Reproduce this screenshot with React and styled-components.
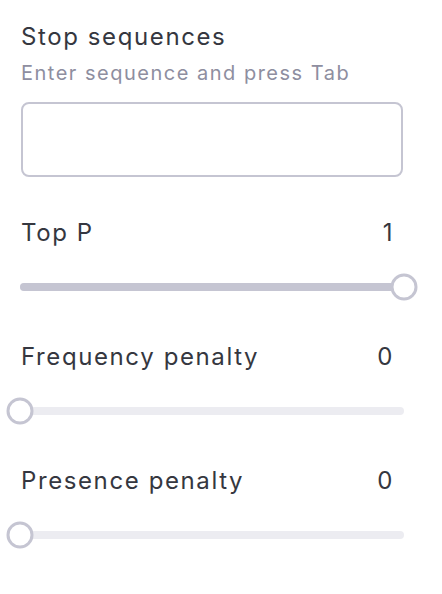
import React from "react";
import styled, { createGlobalStyle } from "styled-components";

const Global = createGlobalStyle`
  html, body { margin: 0; padding: 0; background: #ffffff; }
  body { font-family: Inter, "Noto Sans", sans-serif; -webkit-font-smoothing: antialiased; }
`;

const Panel = styled.div`
  width: 384px;
  padding: 23px 0 48px 20px;
  display: flex;
  flex-direction: column;
`;

const Title = styled.div`
  font-size: 24px;
  line-height: 28px;
  letter-spacing: 1.6px;
  color: #353740;
  padding-left: 1px;
`;

const Hint = styled.div`
  margin-top: 10px;
  font-size: 20px;
  line-height: 24px;
  letter-spacing: 1.5px;
  color: #8e8ea0;
  padding-left: 1px;
`;

const Box = styled.div`
  margin: 17px 1px 0 1px;
  height: 75px;
  box-sizing: border-box;
  border: 2px solid #c5c5d2;
  border-radius: 8px;
`;

const Section = styled.div`
  margin-top: ${(p) => p.$gap}px;
  display: flex;
  flex-direction: column;
`;

const LabelRow = styled.div`
  display: flex;
  justify-content: space-between;
  align-items: center;
  padding: 0 10px 0 1px;
  font-size: 24px;
  line-height: 28px;
  letter-spacing: 1.6px;
  color: #353740;
`;

const Track = styled.div`
  position: relative;
  margin-top: 36px;
  height: 8px;
  border-radius: 4px;
  background: #ececf1;
`;

const Fill = styled.div`
  height: 100%;
  border-radius: 4px;
  background: #c5c5d2;
`;

const Thumb = styled.div`
  position: absolute;
  top: 50%;
  width: 27px;
  height: 27px;
  box-sizing: border-box;
  border: 3.5px solid #c5c5d2;
  border-radius: 50%;
  background: #ffffff;
  transform: translate(-50%, -50%);
`;

function Slider({ label, value, min = 0, max = 1, gap }) {
  const pct = ((value - min) / (max - min)) * 100;
  return (
    <Section $gap={gap}>
      <LabelRow>
        <span>{label}</span>
        <span>{value}</span>
      </LabelRow>
      <Track>
        <Fill style={{ width: `${pct}%` }} />
        <Thumb style={{ left: `${pct}%` }} />
      </Track>
    </Section>
  );
}

export default function App() {
  return (
    <>
      <Global />
      <Panel>
        <Title>Stop sequences</Title>
        <Hint>Enter sequence and press Tab</Hint>
        <Box />
        <Slider label="Top P" value={1} gap={42} />
        <Slider label="Frequency penalty" value={0} min={0} max={2} gap={52} />
        <Slider label="Presence penalty" value={0} min={0} max={2} gap={52} />
      </Panel>
    </>
  );
}
